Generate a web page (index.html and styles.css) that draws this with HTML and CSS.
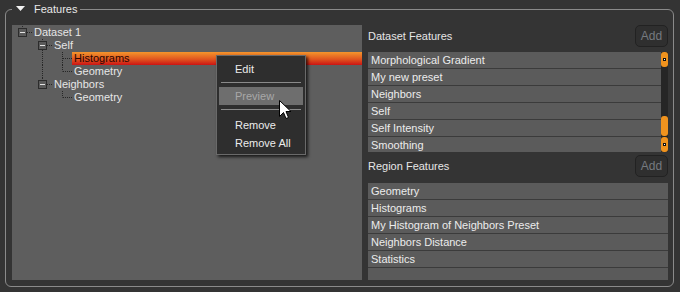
FILE: index.html
```html
<!DOCTYPE html>
<html>
<head>
<meta charset="utf-8">
<link rel="stylesheet" href="styles.css">
</head>
<body>
<fieldset class="group">
  <legend class="group-title">
    <svg class="caret" width="9" height="6" viewBox="0 0 9 6"><polygon points="0,0 9,0 4.5,5" fill="#f2f2f2"/></svg>
    <span>Features</span>
  </legend>
  <div class="group-body">
    <div class="tree">
      <div class="row">
        <svg class="cell" width="20" height="13" viewBox="0 0 20 13"><path class="dot" d="M10.5 0V2M15 6.5H20"/><rect class="box" x="6.5" y="2.5" width="8" height="8"/><path class="minus" d="M8 6.5H13"/></svg>
        <span class="label">Dataset 1</span>
      </div>
      <div class="row">
        <span class="cell"></span>
        <svg class="cell" width="20" height="13" viewBox="0 0 20 13"><path class="dot" d="M10.5 0V2M10.5 11V13M15 6.5H20"/><rect class="box" x="6.5" y="2.5" width="8" height="8"/><path class="minus" d="M8 6.5H13"/></svg>
        <span class="label">Self</span>
      </div>
      <div class="row">
        <span class="cell"></span>
        <svg class="cell" width="20" height="13" viewBox="0 0 20 13"><path class="dot" d="M10.5 0V13"/></svg>
        <svg class="cell" width="20" height="13" viewBox="0 0 20 13"><path class="dot" d="M10.5 0V13M11 6.5H20"/></svg>
        <span class="label selected">Histograms</span>
      </div>
      <div class="row">
        <span class="cell"></span>
        <svg class="cell" width="20" height="13" viewBox="0 0 20 13"><path class="dot" d="M10.5 0V13"/></svg>
        <svg class="cell" width="20" height="13" viewBox="0 0 20 13"><path class="dot" d="M10.5 0V6.5M11 6.5H20"/></svg>
        <span class="label">Geometry</span>
      </div>
      <div class="row">
        <span class="cell"></span>
        <svg class="cell" width="20" height="13" viewBox="0 0 20 13"><path class="dot" d="M10.5 0V2M15 6.5H20"/><rect class="box" x="6.5" y="2.5" width="8" height="8"/><path class="minus" d="M8 6.5H13"/></svg>
        <span class="label">Neighbors</span>
      </div>
      <div class="row">
        <span class="cell"></span>
        <span class="cell"></span>
        <svg class="cell" width="20" height="13" viewBox="0 0 20 13"><path class="dot" d="M10.5 0V6.5M11 6.5H20"/></svg>
        <span class="label">Geometry</span>
      </div>
    </div>
    <div class="side">
      <div class="side-head">
        <span class="side-label">Dataset Features</span>
        <span class="add-btn">Add</span>
      </div>
      <div class="list list-scroll">
        <div class="rows">
          <div class="item">Morphological Gradient</div>
          <div class="item">My new preset</div>
          <div class="item">Neighbors</div>
          <div class="item">Self</div>
          <div class="item">Self Intensity</div>
          <div class="item">Smoothing</div>
        </div>
        <div class="scrollbar">
          <div class="sb-btn"><span class="sb-dot"></span></div>
          <div class="sb-track"><div class="sb-handle"></div></div>
          <div class="sb-btn"><span class="sb-dot"></span></div>
        </div>
      </div>
      <div class="side-head second">
        <span class="side-label">Region Features</span>
        <span class="add-btn">Add</span>
      </div>
      <div class="list list-fill">
        <div class="rows">
          <div class="item">Geometry</div>
          <div class="item">Histograms</div>
          <div class="item">My Histogram of Neighbors Preset</div>
          <div class="item">Neighbors Distance</div>
          <div class="item">Statistics</div>
        </div>
      </div>
    </div>
  </div>
</fieldset>

<div class="menu">
  <div class="menu-item">Edit</div>
  <div class="menu-sep"></div>
  <div class="menu-item disabled hover">Preview</div>
  <div class="menu-sep wide"></div>
  <div class="menu-item">Remove</div>
  <div class="menu-item">Remove All</div>
</div>

<svg class="cursor" width="13" height="20" viewBox="0 0 13 20"><path d="M0.5 0.5V16.5L4.5 12.5L7 18.5L9.5 17.5L7 11.5H12Z" fill="#fff" stroke="#000" stroke-width="1"/></svg>
</body>
</html>
```

FILE: styles.css
```css
* { box-sizing: border-box; }

html, body {
  margin: 0;
  padding: 0;
  background: #343434;
  width: 680px;
  height: 292px;
  overflow: hidden;
  font-family: "Liberation Sans", Arial, sans-serif;
  font-size: 11px;
  color: #e6e6e6;
}

.group {
  margin: 2px 6px 5px 5px;
  padding: 9px 5px 6px 6px;
  border: 1px solid #8a8a8a;
  border-radius: 6px;
  min-width: 0;
}

.group-title {
  display: flex;
  align-items: center;
  height: 14px;
  line-height: 14px;
  padding: 0 3px 0 4px;
  margin-left: 0;
  font-size: 11px;
  color: #e8e8e8;
}

.caret {
  display: block;
  margin-right: 9px;
  margin-top: -1px;
}

.group-body {
  display: flex;
  gap: 6px;
  height: 255px;
}

.tree {
  width: 350px;
  background: #5e5e5e;
  padding-top: 1px;
}

.row {
  display: flex;
  height: 13px;
  line-height: 13px;
}

.cell {
  display: block;
  width: 20px;
  height: 13px;
  flex: none;
}

.dot {
  fill: none;
  stroke: #262626;
  stroke-width: 1;
  stroke-dasharray: 1 1;
}

.box {
  fill: #5a5a5a;
  stroke: #2c2c2c;
  stroke-width: 1;
}

.minus {
  stroke: #e4e4e4;
  stroke-width: 1;
}

.label {
  padding-left: 2px;
  color: #e6e6e6;
  white-space: nowrap;
}

.label.selected {
  flex: 1;
  background: linear-gradient(#f4952c, #e0561f 55%, #cc1414);
  color: #2a0400;
}

.side {
  flex: 1;
  display: flex;
  flex-direction: column;
}

.side-head {
  display: flex;
  justify-content: space-between;
  align-items: center;
  height: 22px;
  flex: none;
}

.side-head.second {
  margin-top: 3px;
}

.side-label {
  color: #e6e6e6;
}

.add-btn {
  width: 33px;
  height: 22px;
  border: 1px solid #222;
  border-radius: 5px;
  background: #2f2f2f;
  color: #767a80;
  font-size: 12px;
  line-height: 20px;
  text-align: center;
}

.list {
  display: flex;
  background: #5a5a5a;
  overflow: hidden;
}

.list-scroll {
  margin-top: 5px;
  height: 100px;
  flex: none;
}

.list-fill {
  margin-top: 6px;
  flex: 1;
}

.rows {
  flex: 1;
  min-width: 0;
}

.item {
  height: 17px;
  line-height: 16px;
  padding-left: 3px;
  border-bottom: 1px solid #3b3b3b;
  background: #5b5b5b;
  color: #ececec;
  white-space: nowrap;
}

.scrollbar {
  width: 7px;
  flex: none;
  display: flex;
  flex-direction: column;
  background: #262626;
}

.sb-btn {
  height: 15px;
  flex: none;
  background: #f0931e;
  border-radius: 3px;
  display: flex;
  align-items: center;
  justify-content: center;
}

.sb-dot {
  width: 3px;
  height: 3px;
  background: #fff;
  border: 1px solid #111;
}

.sb-track {
  flex: 1;
  display: flex;
  flex-direction: column;
  justify-content: flex-end;
  padding-bottom: 1px;
}

.sb-handle {
  height: 20px;
  background: #f0931e;
  border-radius: 3px;
}

.menu {
  position: absolute;
  left: 216px;
  top: 55px;
  width: 90px;
  height: 100px;
  background: #2e2e2e;
  border: 1px solid #6a6a6a;
  box-shadow: 2px 2px 3px rgba(0, 0, 0, 0.75);
  padding: 4px 2px 2px;
}

.menu-item {
  height: 18px;
  line-height: 18px;
  padding-left: 16px;
  color: #ececec;
  white-space: nowrap;
}

.menu-item.hover {
  background: #6e6e6e;
}

.menu-item.disabled {
  color: #a8a8a8;
}

.menu-sep {
  height: 1px;
  margin: 4px 2px;
  background: #8a8a8a;
}

.menu-sep.wide {
  margin: 4px 2px 6px;
}

.cursor {
  position: absolute;
  left: 279px;
  top: 100px;
}
```
